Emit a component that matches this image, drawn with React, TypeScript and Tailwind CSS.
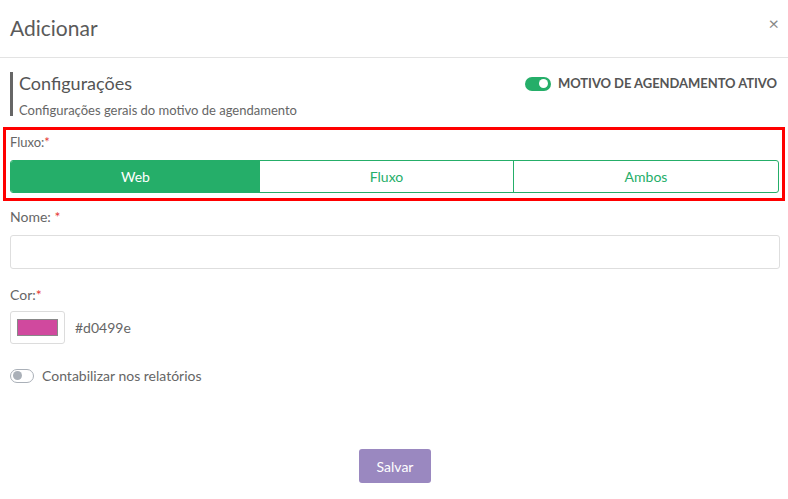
import React from "react";

export default function App() {
  const font = { fontFamily: "Lato, 'Noto Sans', sans-serif" };
  return (
    <div className="w-[788px] h-[499px] bg-white text-[#555]" style={font}>
      <div className="h-[58px] border-b border-[#e3e3e3] flex items-center justify-between pl-[10px] pr-[9px]">
        <span className="text-[21px] text-[#5a5a5a] leading-none -mt-[3px]">Adicionar</span>
        <span className="text-[18px] text-[#888] leading-none -mt-[12px]">×</span>
      </div>
      <div className="px-[10px] pt-[14px]">
        <div className="flex items-start justify-between">
          <div className="border-l-[3px] border-[#666] pl-[6px] h-[44px] flex flex-col">
            <span className="text-[18px] leading-[22px] text-[#555]">Configurações</span>
            <span className="text-[13px] leading-[16px] text-[#666] mt-[8px]">Configurações gerais do motivo de agendamento</span>
          </div>
          <div className="flex items-center gap-[7px] pt-[2px] pr-[1px]">
            <div className="w-[26px] h-[14px] rounded-full bg-[#25ae69] relative">
              <div className="absolute right-[3px] top-[2.5px] w-[9px] h-[9px] rounded-full bg-white" />
            </div>
            <span className="text-[13px] font-bold text-[#555] tracking-[-0.05px]">MOTIVO DE AGENDAMENTO ATIVO</span>
          </div>
        </div>
      </div>
      <div className="mx-[3px] mt-[11px] border-[3px] border-[#ff0000] h-[74px] pl-[4px] pr-[3px] pt-[4px]">
        <div className="text-[13px] text-[#666] leading-[16px]">Fluxo:<span className="text-[#e53935]">*</span></div>
        <div className="mt-[10px] flex h-[33px] border border-[#25ae69] rounded-[3px] overflow-hidden text-[14px]">
          <div className="w-[249px] bg-[#25ae69] text-white flex items-center justify-center">Web</div>
          <div className="w-[254px] border-r border-[#25ae69] text-[#25ae69] flex items-center justify-center">Fluxo</div>
          <div className="flex-1 text-[#25ae69] flex items-center justify-center">Ambos</div>
        </div>
      </div>
      <div className="pl-[10px] pr-[8px]">
        <div className="mt-[8px] text-[14px] text-[#666] leading-[16px]">Nome: <span className="text-[#e53935]">*</span></div>
        <div className="mt-[10px] h-[34px] border border-[#dedede] rounded-[3px]" />
        <div className="mt-[18px] text-[14px] text-[#666] leading-[16px]">Cor:<span className="text-[#e53935]">*</span></div>
        <div className="mt-[8px] flex items-center gap-[10px]">
          <div className="w-[55px] h-[33px] border border-[#dcdcdc] rounded-[3px] flex items-center justify-center">
            <div className="w-[41px] h-[17px] bg-[#d0499e] border border-[#888]" />
          </div>
          <span className="text-[14px] text-[#666]">#d0499e</span>
        </div>
        <div className="mt-[21px] flex items-center gap-[8px]">
          <div className="w-[24px] h-[14px] rounded-full border border-[#aab0b8] relative bg-white">
            <div className="absolute left-[1.5px] top-[1.5px] w-[9px] h-[9px] rounded-full bg-[#aab0b8]" />
          </div>
          <span className="text-[14px] text-[#666]">Contabilizar nos relatórios</span>
        </div>
        <div className="mt-[63px] flex justify-center">
          <div className="w-[72px] h-[34px] rounded-[3px] bg-[#9a88c0] text-white text-[14px] flex items-center justify-center">Salvar</div>
        </div>
      </div>
    </div>
  );
}
